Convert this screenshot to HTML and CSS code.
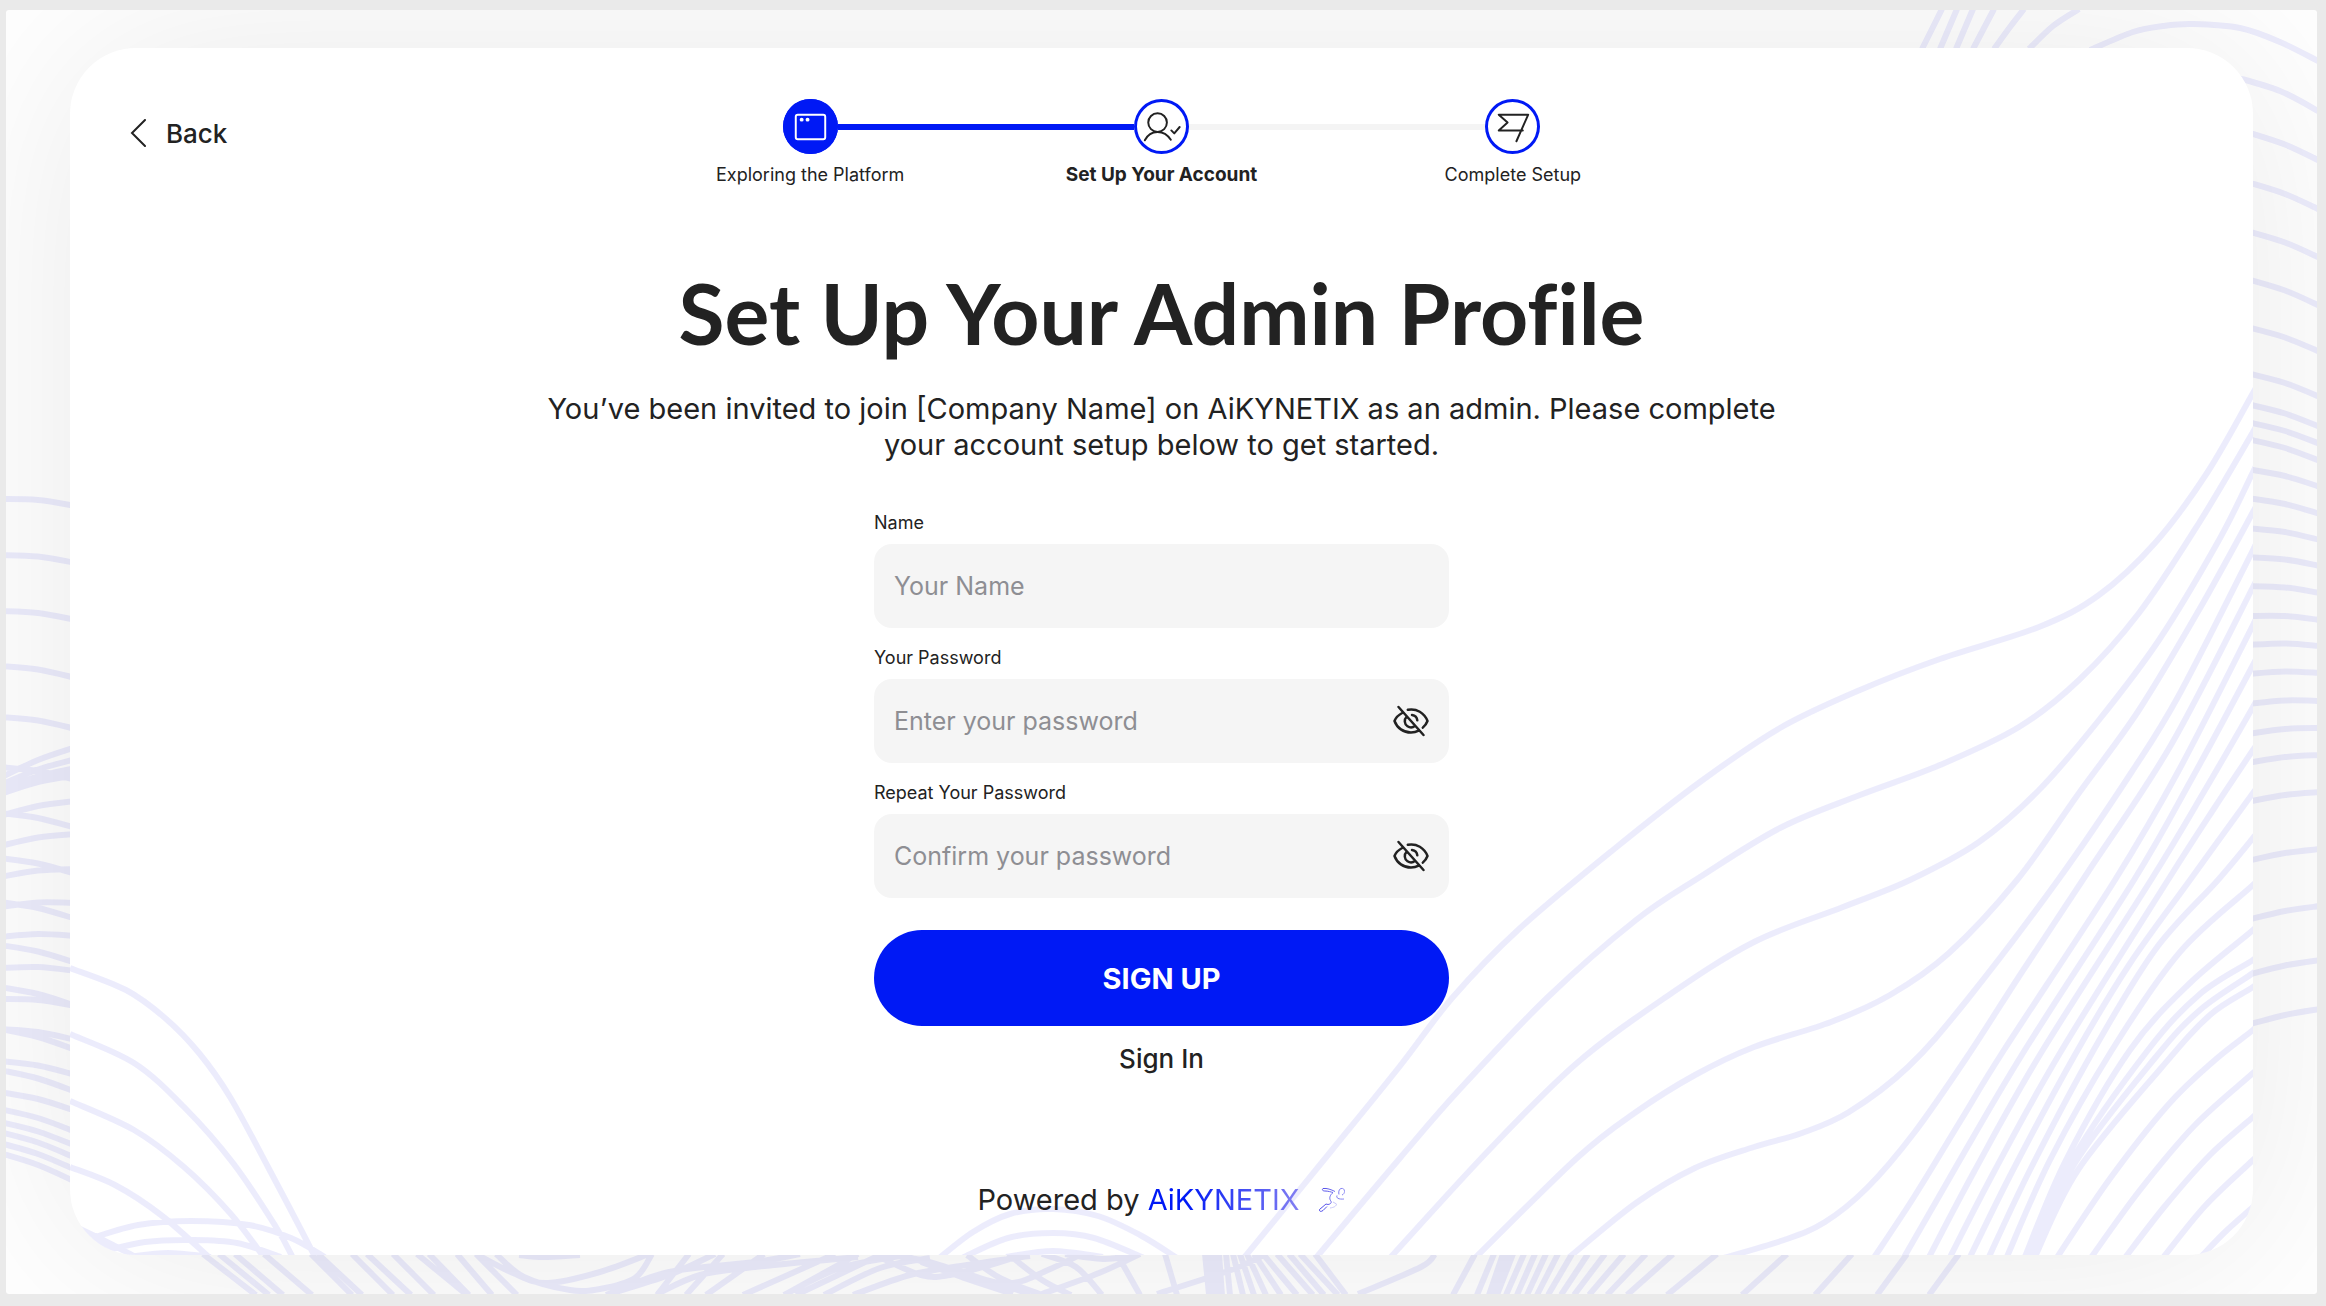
FILE: index.html
```html
<!DOCTYPE html>
<html lang="en">
<head>
  <meta charset="utf-8">
  <meta name="viewport" content="width=device-width, initial-scale=1">
  <title>Set Up Your Admin Profile</title>
  <link rel="stylesheet" href="styles.css">
  <script src="waves.js" defer></script>
</head>
<body>
  <svg class="sprite" aria-hidden="true">
    <symbol id="eye-off" viewBox="0 0 36 32">
      <path d="M10 7.500C6 9.500 2.800 12.500 1.500 16C4 23 10.500 27.500 18 27.500C20.800 27.500 23.400 26.900 25.700 25.700M14.800 4.800C23.500 3 31.500 8 34.500 16C33.600 18.500 32 20.700 29.800 22.600M5.500 2L30.500 30M13.700 11.500C10.800 14.500 11.300 19.200 14.500 21.300C16.800 22.800 20 22.600 22 20.800M19 10C22 10.400 24 12.500 24.300 15.300"/>
    </symbol>
  </svg>

  <div class="frame">
    <svg class="waves" data-waves="frame" viewBox="6 10 2311 1284" preserveAspectRatio="none" aria-hidden="true"></svg>

    <main class="card">
      <svg class="waves" data-waves="card" viewBox="70 48 2183 1207" preserveAspectRatio="none" aria-hidden="true"></svg>

      <header class="topbar">
        <a class="back" href="#">
          <svg class="back-icon" viewBox="0 0 16 28" aria-hidden="true"><path d="M15 1L2 14L15 27"/></svg>
          Back
        </a>
        <ol class="steps">
          <li class="step step-done">
            <span class="step-dot">
              <svg viewBox="0 0 56 56" aria-hidden="true"><rect x="13" y="16" width="30" height="25" rx="2"/><circle class="dot" cx="19" cy="21" r="2"/><circle class="dot" cx="25" cy="21" r="2"/></svg>
            </span>
            <span class="step-label">Exploring the Platform</span>
          </li>
          <li class="step step-current" aria-current="step">
            <span class="step-dot">
              <svg viewBox="0 0 56 56" aria-hidden="true"><circle cx="24" cy="24" r="9.500"/><path d="M11 42C14 36 18.500 33.500 24 33.500S34 36 37.500 41.500M38 32L41 35L46.500 28.500"/></svg>
            </span>
            <span class="step-label">Set Up Your Account</span>
          </li>
          <li class="step">
            <span class="step-dot">
              <svg viewBox="0 0 56 56" aria-hidden="true"><path d="M38.500 32H14L23 24L14 16H44L32 43"/></svg>
            </span>
            <span class="step-label">Complete Setup</span>
          </li>
        </ol>
      </header>

      <h1 class="title">Set Up Your Admin Profile</h1>
      <p class="intro">You’ve been invited to join [Company Name] on AiKYNETIX as an admin. Please complete your account setup below to get started.</p>

      <form class="form">
        <div class="field">
          <label class="label" for="name">Name</label>
          <div class="control"><input class="input" id="name" type="text" placeholder="Your Name"></div>
        </div>
        <div class="field">
          <label class="label" for="password">Your Password</label>
          <div class="control">
            <input class="input" id="password" type="password" placeholder="Enter your password">
            <button class="reveal" type="button" aria-label="Show password"><svg aria-hidden="true"><use href="#eye-off"/></svg></button>
          </div>
        </div>
        <div class="field">
          <label class="label" for="repeat">Repeat Your Password</label>
          <div class="control">
            <input class="input" id="repeat" type="password" placeholder="Confirm your password">
            <button class="reveal" type="button" aria-label="Show password"><svg aria-hidden="true"><use href="#eye-off"/></svg></button>
          </div>
        </div>
        <button class="submit" type="submit">SIGN UP</button>
        <a class="signin" href="#">Sign In</a>
      </form>

      <footer class="powered">
        <span>Powered by <span class="brand">AiKYNETIX</span></span>
        <svg class="runner" viewBox="0 0 28 26" aria-hidden="true">
          <defs>
            <linearGradient id="runner-ink" x1="0" x2="1"><stop offset="0" stop-color="#4a46e8"/><stop offset="1" stop-color="#8d8af2"/></linearGradient>
          </defs>
          <path stroke="url(#runner-ink)" d="M5 1.500C9 1 13 2.500 17 4.500M5 1.500C3.500 3 5 4 7 4C10 4 13 5 15 5.500C12 8 11 11 12.500 13.500C14 15.500 13 17 10 17.500L8 17L1.500 22.500C1 24.500 3 25 5 23.500L9 19.500M23 1.500C20.500 2 20.500 6 21 7.500M23 1.500C25 1 26.500 2 26.500 4.500C26.500 6 25.500 7.500 24 8M19 8.500C18 11 20.500 12.500 26 12"/>
          <path stroke="#c9c8fa" d="M15 15L18.500 17C18.500 19 16 20.500 12 21"/>
        </svg>
      </footer>
    </main>
  </div>
</body>
</html>
```
FILE: styles.css
```css
* {
  box-sizing: border-box;
}

body {
  margin: 0;
  min-height: 100vh;
  display: flex;
  padding: 10px 9px 12px 6px;
  background: #eaeaea;
  color: #222;
  font-family: Inter, "Liberation Sans", sans-serif;
}

a {
  color: inherit;
  text-decoration: none;
}

button {
  border: 0;
  padding: 0;
  background: none;
  font: inherit;
  cursor: pointer;
}

.sprite {
  position: absolute;
  width: 0;
  height: 0;
}

.frame {
  position: relative;
  flex: 1;
  display: flex;
  padding: 38px 64px 39px;
  overflow: hidden;
  border-radius: 3px;
  background: #fff;
}

.card {
  position: relative;
  flex: 1;
  display: flex;
  flex-direction: column;
  align-items: center;
  padding: 51px 58px 37px;
  border-radius: 66px;
  background: #fff;
  box-shadow: 0 0 200px rgba(0, 0, 0, 0.09);
}

/* Decorative line art behind the content */
.waves {
  position: absolute;
  inset: 0;
  width: 100%;
  height: 100%;
  border-radius: inherit;
  overflow: hidden;
  opacity: 0.07;
  fill: none;
  stroke: #0c00e0;
  stroke-width: 6;
  pointer-events: none;
}

.frame > .waves {
  z-index: 1;
}

.card {
  z-index: 2;
}

.card > :not(.waves) {
  position: relative;
}

.topbar {
  width: 100%;
  display: grid;
  grid-template-columns: 1fr minmax(0, 1054px) 1fr;
  align-items: start;
}

.back {
  display: flex;
  align-items: center;
  gap: 20px;
  height: 68px;
  font-size: 26px;
  font-weight: 500;
}

.back-icon {
  width: 16px;
  height: 28px;
  margin-left: 2px;
  fill: none;
  stroke: #222;
  stroke-width: 2;
  stroke-linecap: round;
}

.steps {
  display: grid;
  grid-template-columns: repeat(3, 1fr);
  margin: 0;
  padding: 0;
  list-style: none;
}

.step {
  display: grid;
  grid-template-columns: 1fr 55px 1fr;
  align-items: center;
  row-gap: 8px;
}

.step::before,
.step::after {
  content: "";
  height: 6px;
  background: #f4f4f4;
}

.step::before {
  order: 1;
}

.step-dot {
  order: 2;
}

.step::after {
  order: 3;
}

.step-label {
  order: 4;
}

.step:first-child::before,
.step:last-child::after {
  visibility: hidden;
}

.step-done::after,
.step-current::before {
  background: #0019f5;
}

.step-dot {
  height: 55px;
  border-radius: 50%;
  background: #fff;
  box-shadow: inset 0 0 0 3px #0019f5;
}

.step-dot svg {
  display: block;
  fill: none;
  stroke: #222;
  stroke-width: 2;
  stroke-linejoin: round;
  stroke-linecap: round;
}

.step-done .step-dot {
  background: #0019f5;
}

.step-done svg {
  stroke: #fff;
}

.step .dot {
  fill: #fff;
  stroke: none;
}

.step-label {
  grid-column: 1 / -1;
  font-size: 18px;
  line-height: 25px;
  text-align: center;
}

.step-current .step-label {
  font-size: 19px;
  font-weight: 700;
}

.title {
  margin: 76px 0 0;
  font-family: Lato, Inter, sans-serif;
  font-size: 84px;
  font-weight: 700;
  font-variant-ligatures: none;
  line-height: 100px;
  text-align: center;
}

.intro {
  max-width: 1260px;
  margin: 28px 0 0;
  font-size: 29px;
  line-height: 36px;
  text-align: center;
}

.form {
  width: 100%;
  max-width: 575px;
  display: flex;
  flex-direction: column;
  margin-top: 46px;
}

.field {
  display: flex;
  flex-direction: column;
  gap: 8px;
  margin-bottom: 16px;
}

.label {
  font-size: 18px;
  line-height: 27px;
}

.control {
  display: flex;
  align-items: center;
  height: 84px;
  padding: 0 20px;
  border-radius: 18px;
  background: #f5f5f5;
}

.input {
  flex: 1;
  min-width: 0;
  height: 100%;
  padding: 0;
  border: 0;
  outline: 0;
  background: none;
  color: #222;
  font: inherit;
  font-size: 25px;
}

.input::placeholder {
  color: #8e8e93;
  opacity: 1;
}

.reveal svg {
  display: block;
  width: 36px;
  height: 32px;
  fill: none;
  stroke: #222;
  stroke-width: 2.5;
  stroke-linecap: round;
  stroke-linejoin: round;
}

.submit {
  height: 96px;
  margin-top: 16px;
  border-radius: 48px;
  background: #0019f5;
  color: #fff;
  font-size: 29px;
  font-weight: 700;
}

.signin {
  align-self: center;
  margin-top: 16px;
  font-size: 26px;
  font-weight: 500;
  line-height: 34px;
}

.powered {
  display: flex;
  align-items: center;
  gap: 18px;
  margin-top: auto;
  font-size: 29px;
  line-height: 36px;
}

.brand {
  background: linear-gradient(90deg, #0019f5 25%, #8480f2);
  background-clip: text;
  color: transparent;
}

.runner {
  width: 28px;
  height: 26px;
  fill: none;
}
```
FILE: waves.js
```js
// Line art: every entry is a flat list of x, y pairs that a smooth curve runs through.
const card = [
  [70,968,126,990,165,1018,199,1053,230,1097,268,1167,314,1255,325,1280],
  [70,1034,134,1063,184,1107,233,1163,276,1227,294,1260],
  [70,1101,134,1130,184,1167,230,1213,266,1260],
  [70,1167,115,1185,161,1215,210,1258],
  [92,1238,138,1225,191,1221,249,1225,291,1238,325,1257],
  [105,1251,145,1242,191,1240,237,1243,281,1257],
  [128,1257,168,1253,211,1257],
  [78,1228,103,1240,134,1256],
  [92,1238,114,1251],
  [938,1259,973,1232,1010,1214,1053,1209,1098,1216,1140,1235,1177,1258],
  [962,1258,1008,1238,1053,1233,1094,1238,1144,1258],
  [1006,1257,1053,1251,1103,1257],
  [1243,1259,1332,1150,1400,1066,1453,997,1518,930,1613,850,1700,782,1780,728,1860,690,1940,659,2039,627,2099,595,2155,543,2207,473,2253,393,2260,380],
  [1315,1259,1400,1158,1459,1090,1548,997,1636,920,1700,877,1780,828,1860,795,1940,765,2019,727,2079,680,2139,613,2199,523,2253,432,2260,418],
  [1389,1259,1489,1150,1577,1063,1666,997,1754,942,1843,907,1910,880,1979,842,2039,790,2099,720,2159,640,2219,540,2253,472,2260,458],
  [1474,1259,1577,1158,1636,1112,1695,1075,1754,1047,1831,1022,1890,995,1949,953,2017,880,2079,793,2139,710,2199,610,2253,512,2260,498],
  [1567,1259,1636,1203,1695,1168,1754,1147,1802,1133,1849,1112,1908,1067,1967,1000,2058,880,2131,773,2179,695,2253,550,2260,535],
  [1720,1259,1784,1240,1825,1222,1867,1188,1914,1133,1967,1057,2020,975,2088,872,2171,745,2253,587,2260,572],
  [1873,1259,1914,1197,1961,1120,2004,1050,2115,880,2179,770,2253,625,2260,610],
  [1903,1259,1949,1179,2023,1053,2134,880,2190,782,2253,665,2260,650],
  [1928,1259,1975,1170,2041,1053,2151,880,2205,790,2253,707,2260,694],
  [1949,1259,1995,1170,2060,1053,2168,880,2215,807,2253,750,2260,740],
  [1969,1259,2013,1170,2076,1053,2129,965,2190,880,2253,793,2260,784],
  [1988,1259,2030,1170,2092,1053,2155,950,2218,880,2253,838,2260,829],
  [2006,1259,2050,1160,2112,1050,2180,952,2253,885,2260,876],
  [2024,1259,2066,1160,2130,1050,2190,983,2253,930,2260,921],
  [2028,1259,2072,1160,2148,1050,2200,994,2253,960,2260,952],
  [2031,1259,2075,1163,2155,1058,2200,1010,2253,973,2260,965],
  [2034,1259,2078,1170,2162,1067,2210,1015,2253,987,2260,979],
  [2056,1259,2109,1180,2168,1105,2215,1060,2253,1030,2260,1022],
  [2090,1259,2140,1190,2195,1125,2253,1073,2260,1065],
  [2124,1259,2165,1206,2210,1155,2253,1117,2260,1110],
  [2162,1259,2205,1206,2253,1160,2260,1152],
  [2199,1259,2225,1232,2253,1207,2260,1200]
];

// Short arcs in the side margins: y at the left end, y at the right end.
const left = [[499,505],[555,562],[611,619],[666,677],[717,728],[767,779],[778,746],[785,758],[790,767],[793,770],[794,774],[816,800],[813,827],[846,833],[858,873],[877,868],[907,902],[902,918],[937,935],[945,962],[968,970],[987,1005],[999,1005],[1029,1039],[1029,1049],[1061,1074],[1070,1091],[1092,1110],[1109,1131],[1122,1145],[1132,1157],[1143,1169],[1153,1181]];
const right = [[133,160],[183,209],[232,257],[280,305],[328,351],[374,396],[405,426],[423,443],[440,460],[470,486],[499,513],[529,539],[558,565],[587,592],[617,619],[646,645],[675,672],[705,700],[735,727],[764,754],[803,791],[862,848],[921,905],[976,959],[1026,1008]];

// Strokes that cross the bottom margin: x at its top edge, x at its bottom edge.
const bottom = [[203,256],[219,269],[235,283],[264,312],[311,352],[318,362],[352,393],[367,411],[393,434],[417,467],[429,469],[457,492],[476,517],[689,657],[723,686],[764,706],[835,743],[858,784],[882,796],[1117,1140],[1165,1177],[1205,1209],[1209,1213],[1214,1218],[1219,1222],[1226,1230],[1233,1243],[1240,1254],[1247,1266],[1254,1281],[1263,1297],[1277,1313],[1289,1324],[1300,1338],[1315,1346],[1475,1453],[1494,1477],[1503,1489],[1507,1492],[1513,1497],[1524,1506],[1535,1517],[1546,1527],[1558,1537],[1572,1548],[1588,1561],[1605,1574],[1624,1589],[1646,1607],[1673,1627],[1717,1667],[1787,1742],[1852,1815],[1907,1877],[1959,1929]];

const frame = [
  ...left.map(([a, b]) => [0, a, 38, (a + b) / 2 - 2, 76, b + 1]),
  ...right.map(([a, b]) => [2247, a - 1, 2285, (a + b) / 2 - 2, 2320, b + 1]),
  ...bottom.map(([a, b]) => [a, 1254, b, 1295]),
  [476,1254,513,1273,547,1283,600,1272,649,1254],
  [496,1254,524,1277,570,1290,600,1289,635,1278,652,1254],
  [519,1255,543,1257,580,1255],
  [606,1295,669,1272,755,1262,800,1254],
  [657,1294,700,1275,755,1267,858,1257],
  [715,1254,669,1275,606,1295],
  [784,1295,840,1268,900,1256],
  [824,1295,880,1268,930,1258],
  [853,1295,910,1275,967,1265,1030,1256],
  [875,1255,921,1275,950,1275,990,1265,1025,1254],
  [899,1254,973,1277,1013,1283,1048,1270,1082,1254],
  [921,1262,970,1280,1013,1294],
  [880,1255,921,1260,980,1278,1030,1294],
  [967,1255,1000,1278,1042,1295],
  [1008,1254,1042,1280,1071,1295],
  [1042,1254,1076,1267,1102,1295],
  [1065,1254,1105,1259,1137,1254],
  [1042,1294,1099,1273,1140,1254],
  [1157,1294,1231,1270,1266,1254],
  [1358,1294,1421,1267,1435,1254],
  [1922,49,1942,9],[1940,49,1957,9],[1956,49,1973,9],[1973,49,1994,9],
  [1994,49,2010,27,2024,9],[2029,49,2053,26,2079,9],
  [2090,50,2133,32,2163,26,2193,24,2240,28,2280,42,2320,62],
  [2235,77,2280,91,2320,112]
];

// Catmull-Rom spline written as cubic Bezier segments.
function curve(flat) {
  const p = [];
  for (let i = 0; i < flat.length; i += 2) p.push([flat[i], flat[i + 1]]);
  let d = `M${p[0]}`;
  for (let i = 0; i < p.length - 1; i++) {
    const a = p[i - 1] || p[i], b = p[i], c = p[i + 1], e = p[i + 2] || c;
    d += `C${b[0] + (c[0] - a[0]) / 6} ${b[1] + (c[1] - a[1]) / 6} ${c[0] - (e[0] - b[0]) / 6} ${c[1] - (e[1] - b[1]) / 6} ${c}`;
  }
  return d;
}

const sets = { card, frame };
document.querySelectorAll("[data-waves]").forEach((svg) => {
  const path = document.createElementNS("http://www.w3.org/2000/svg", "path");
  path.setAttribute("d", sets[svg.dataset.waves].map(curve).join(""));
  svg.append(path);
});
```
